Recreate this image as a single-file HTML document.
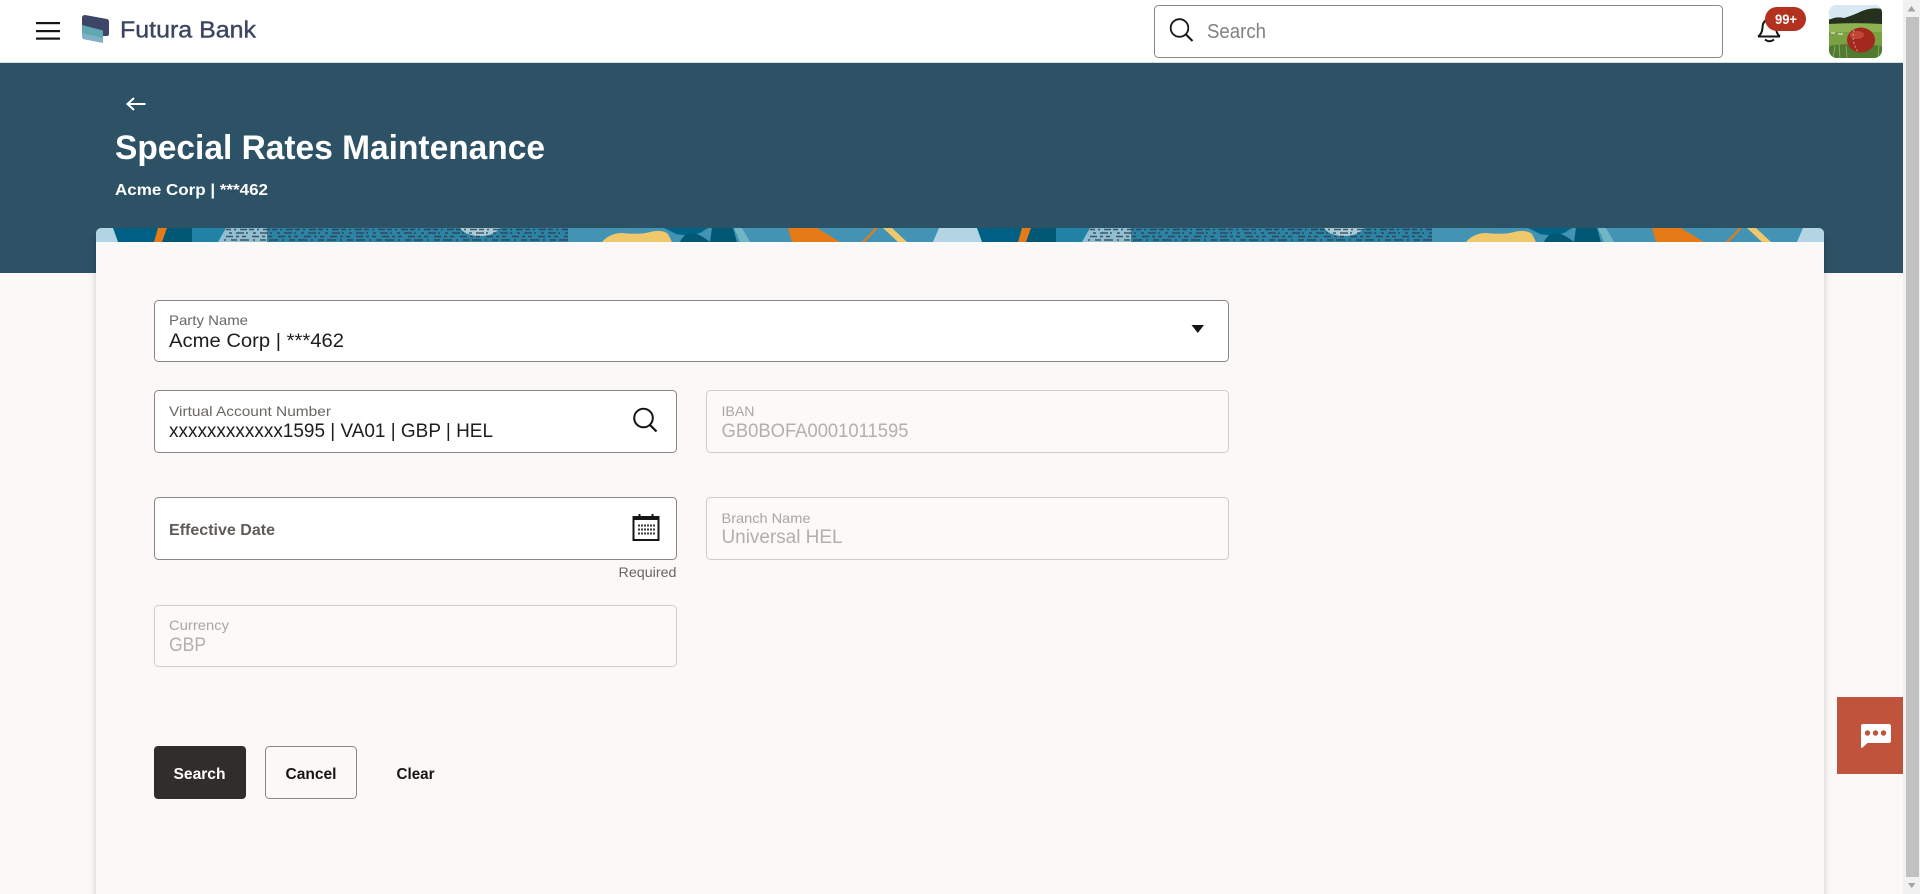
<!DOCTYPE html>
<html lang="en">
<head>
<meta charset="utf-8">
<title>Special Rates Maintenance</title>
<style>
html,body{margin:0;padding:0;width:1920px;height:894px;overflow:hidden;background:#faf9f7}
svg{display:block;position:absolute;left:0;top:0}
text{font-family:"Liberation Sans",Arial,sans-serif;white-space:pre}
.lbl{font-size:14px;fill:#6a6762}
.val{font-size:19px;fill:#1f1d1b}
.dl{font-size:14px;fill:#a8a6a2}
.dv{font-size:19px;fill:#b2b0ac}
</style>
</head>
<body>
<svg width="1920" height="894" viewBox="0 0 1920 894" xmlns="http://www.w3.org/2000/svg">
<defs>
<clipPath id="strip"><path d="M96 242V233a5 5 0 0 1 5-5H1819a5 5 0 0 1 5 5V242Z"/></clipPath>
<clipPath id="av"><rect x="1829" y="5" width="53" height="53" rx="8"/></clipPath>
<filter id="sh" x="-5%" y="-5%" width="110%" height="110%"><feGaussianBlur stdDeviation="4"/></filter>
<g id="tile">
  <rect x="96" y="228" width="864" height="14" fill="#4393b4"/>
  <rect x="96" y="228" width="22" height="14" fill="#b3d4e2"/>
  <path d="M113 228H192V242H118Z" fill="#005f85"/>
  <path d="M167 228H192V242H162Z" fill="#005874"/>
  <path d="M158 228H167L162 242H154Z" fill="#e67a17"/>
  <path d="M192 228H226L218 242H192Z" fill="#2181a6"/>
  <path d="M226 228H267L270 242H218Z" fill="#8fbfd2"/>
  <rect x="267" y="228" width="301" height="14" fill="#2b83a6"/>
  <path d="M460 228H500Q494 236 480 236Q466 236 460 228Z" fill="#a9cbd9"/>
  <g stroke="#2f3a44" stroke-width="1.600" opacity=".8" fill="none">
    <path d="M226 229.500H568" stroke-dasharray="5 3 2 4 7 2"/>
    <path d="M229 233H568" stroke-dasharray="3 4 8 2 2 5"/>
    <path d="M226 236.500H568" stroke-dasharray="7 3 3 3 4 6"/>
    <path d="M224 240H568" stroke-dasharray="2 5 6 3 9 4"/>
  </g>
  <path d="M602 242Q610 233 622 233Q640 235 650 232Q662 229 668 234L672 242Z" fill="#f0c86c"/>
  <path d="M664 228H708L700 233L690 236L676 234Z" fill="#006489"/>
  <path d="M680 242Q684 233 693 233Q700 234 710 242Z" fill="#005874"/>
  <path d="M712 228H733L737 242H710Z" fill="#005874"/>
  <path d="M734 228H742L750 242H740Z" fill="#72b5c5"/>
  <path d="M788 228H817L840 242H792Z" fill="#e67a17"/>
  <path d="M875 228H878L865 242H862Z" fill="#e67a17"/>
  <path d="M883 228H892L907 242H898Z" fill="#f0c86c"/>
  <path d="M939 228H960V242H933Z" fill="#b3d4e2"/>
</g>
</defs>

<!-- page -->
<rect width="1920" height="894" fill="#faf9f7"/>

<!-- banner -->
<rect x="0" y="63" width="1903" height="210" fill="#2d5165"/>
<g fill="none" stroke="#27495c" stroke-width="1" opacity=".18">
  <path d="M40 80Q140 70 180 150T90 230"/><path d="M70 90Q130 90 150 150T80 205"/>
  <path d="M560 70Q700 100 680 170T560 225"/><path d="M1180 80Q1300 60 1340 130T1240 225"/>
  <path d="M1210 100Q1290 90 1310 135T1250 200"/><path d="M1500 70Q1620 130 1560 190T1420 225"/>
  <path d="M1700 80Q1800 110 1780 170T1680 225"/>
</g>

<!-- header -->
<rect x="0" y="0" width="1903" height="62" fill="#fff"/>
<rect x="0" y="62" width="1903" height="1" fill="#dcdcdc"/>
<g fill="#161513">
  <rect x="36" y="22" width="24" height="2.200"/>
  <rect x="36" y="30" width="24" height="2.200"/>
  <rect x="36" y="37.500" width="24" height="2.200"/>
</g>
<!-- logo -->
<path d="M82 18Q82 15 85 15L107 19Q109 19.500 109 22V34Q109 36 107 36H103V31L82 25.500Z" fill="#3e4667"/>
<path d="M82 25L103 30.500V38.500L82 33.500Z" fill="#5fa8b0"/>
<path d="M82 33L103 38V43L85 39.500Q82 39 82 37Z" fill="#7fb0c6"/>
<text x="120" y="37.300" font-size="23" font-weight="400" fill="#3b4560" stroke="#3b4560" stroke-width=".4" textLength="136" lengthAdjust="spacingAndGlyphs">Futura Bank</text>

<!-- search -->
<rect x="1154.500" y="5.500" width="568" height="52" rx="4" fill="#fff" stroke="#8a8886"/>
<circle cx="1179.500" cy="28" r="8.800" fill="none" stroke="#161513" stroke-width="1.800"/>
<path d="M1186 34.500L1192.500 41" stroke="#161513" stroke-width="2" fill="none"/>
<text x="1207" y="38" font-size="20" fill="#82807d" textLength="59" lengthAdjust="spacingAndGlyphs">Search</text>

<!-- bell -->
<path d="M1758 36.500Q1762 34 1762.500 28Q1762.500 20 1770 19M1758 36.500H1780" fill="none" stroke="#161513" stroke-width="2"/>
<path d="M1780 36.500Q1776.500 34 1776 28" fill="none" stroke="#161513" stroke-width="2"/>
<path d="M1765 39.500Q1769.500 43 1774 39.500" fill="none" stroke="#161513" stroke-width="2"/>
<rect x="1765" y="7" width="41" height="24" rx="12" fill="#b3311f"/>
<text x="1775" y="24" font-size="14" font-weight="700" fill="#fff" textLength="22" lengthAdjust="spacingAndGlyphs">99+</text>

<!-- avatar -->
<g clip-path="url(#av)">
  <rect x="1829" y="5" width="53" height="53" fill="#7ba043"/>
  <rect x="1829" y="5" width="53" height="14" fill="#d9e9f2"/>
  <path d="M1829 20Q1836 16 1844 18Q1854 15 1862 11Q1872 7 1882 9V24Q1855 22 1829 24Z" fill="#26301f"/>
  <rect x="1829" y="24" width="53" height="8" fill="#8db252"/>
  <path d="M1829 46Q1850 42 1882 46V58H1829Z" fill="#4f7a2f"/>
  <path d="M1833 58L1835 46M1840 58L1839 44M1847 58L1846 46M1878 58L1879 46" stroke="#8fb464" stroke-width=".8" fill="none"/>
  <ellipse cx="1861" cy="40" rx="14" ry="12.500" fill="#a5281f"/>
  <ellipse cx="1857" cy="35" rx="7" ry="4" fill="#c2473a"/>
  <path d="M1854 30Q1851 41 1858 52" stroke="#c9a87a" stroke-width="1" stroke-dasharray="2 2" fill="none"/>
  <path d="M1838 34h5M1831 33h4" stroke="#e8e4d8" stroke-width="1.200"/>
</g>

<!-- card -->
<rect x="96" y="236" width="1728" height="680" fill="#000" opacity=".18" filter="url(#sh)"/>
<rect x="96" y="240" width="1728" height="654" fill="#faf9f7"/>
<g clip-path="url(#strip)">
  <use href="#tile"/>
  <use href="#tile" transform="translate(864 0)"/>
</g>

<!-- Party -->
<rect x="154.500" y="300.500" width="1074" height="61" rx="4" fill="#fff" stroke="#8a8886"/>
<text class="lbl" x="169" y="325" textLength="79" lengthAdjust="spacingAndGlyphs">Party Name</text>
<text class="val" x="169" y="347" textLength="175" lengthAdjust="spacingAndGlyphs">Acme Corp | ***462</text>
<path d="M1191.500 325H1204L1197.800 333Z" fill="#161513"/>

<!-- VA -->
<rect x="154.500" y="390.500" width="522" height="62" rx="4" fill="#fff" stroke="#8a8886"/>
<text class="lbl" x="169" y="416" textLength="162" lengthAdjust="spacingAndGlyphs">Virtual Account Number</text>
<text class="val" x="169" y="437" textLength="324" lengthAdjust="spacingAndGlyphs">xxxxxxxxxxxx1595 | VA01 | GBP | HEL</text>
<circle cx="643.500" cy="418" r="9.300" fill="none" stroke="#161513" stroke-width="2"/>
<path d="M650 425L656.500 431.500" stroke="#161513" stroke-width="2.200" fill="none"/>

<!-- IBAN -->
<rect x="706.500" y="390.500" width="522" height="62" rx="4" fill="#fbfaf8" stroke="#d0cecb"/>
<text class="dl" x="721.500" y="416" textLength="33" lengthAdjust="spacingAndGlyphs">IBAN</text>
<text class="dv" x="721.500" y="437" textLength="187" lengthAdjust="spacingAndGlyphs">GB0BOFA0001011595</text>

<!-- Effective -->
<rect x="154.500" y="497.500" width="522" height="62" rx="4" fill="#fff" stroke="#8a8886"/>
<text x="169" y="535" font-size="16" font-weight="700" fill="#5f5c57" textLength="106" lengthAdjust="spacingAndGlyphs">Effective Date</text>
<rect x="633.500" y="517" width="25" height="23" fill="none" stroke="#161513" stroke-width="2"/>
<rect x="633.500" y="517" width="25" height="3" fill="#161513"/>
<path d="M639.500 514V519M652.500 514V519" stroke="#161513" stroke-width="2"/>
<g stroke="#161513" stroke-width="2" stroke-dasharray="2 1" opacity=".85">
  <path d="M638 525.500H655M638 529.500H655M638 533.500H655"/>
</g>
<text class="lbl" x="618.500" y="577" textLength="58" lengthAdjust="spacingAndGlyphs">Required</text>

<!-- Branch -->
<rect x="706.500" y="497.500" width="522" height="62" rx="4" fill="#fbfaf8" stroke="#d0cecb"/>
<text class="dl" x="721.500" y="523" textLength="89" lengthAdjust="spacingAndGlyphs">Branch Name</text>
<text class="dv" x="721.500" y="543" textLength="121" lengthAdjust="spacingAndGlyphs">Universal HEL</text>

<!-- Currency -->
<rect x="154.500" y="605.500" width="522" height="61" rx="4" fill="#fbfaf8" stroke="#d0cecb"/>
<text class="dl" x="169" y="630" textLength="60" lengthAdjust="spacingAndGlyphs">Currency</text>
<text class="dv" x="169" y="651" textLength="37" lengthAdjust="spacingAndGlyphs">GBP</text>

<!-- Buttons -->
<rect x="154" y="746" width="92" height="53" rx="4" fill="#312d2a"/>
<text x="173.500" y="779" font-size="16" font-weight="700" fill="#fff" textLength="52" lengthAdjust="spacingAndGlyphs">Search</text>
<rect x="265.500" y="746.500" width="91" height="52" rx="4" fill="none" stroke="#8a8886"/>
<text x="285.500" y="779" font-size="16" font-weight="700" fill="#161513" textLength="51" lengthAdjust="spacingAndGlyphs">Cancel</text>
<text x="396.500" y="779" font-size="16" font-weight="700" fill="#161513" textLength="38" lengthAdjust="spacingAndGlyphs">Clear</text>

<!-- chat -->
<rect x="1837" y="697" width="66" height="77" fill="#c0533c"/>
<path d="M1863 724H1888.500Q1891 724 1891 726.500V741Q1891 743 1888.500 743H1867.500L1862 748Q1861 748 1861 747V726.500Q1861 724 1863 724Z" fill="#fff"/>
<circle cx="1867.500" cy="733" r="2.700" fill="#c0533c"/>
<circle cx="1875.500" cy="733" r="2.700" fill="#c0533c"/>
<circle cx="1883.500" cy="733" r="2.700" fill="#c0533c"/>

<!-- scrollbar -->
<rect x="1903" y="0" width="17" height="894" fill="#f1f1f1"/>
<rect x="1906" y="17" width="13" height="860" fill="#c1c1c1"/>
<path d="M1911.500 6L1915.500 11.500H1907.500Z" fill="#a3a3a3"/>
<path d="M1908 883H1915.500L1911.700 888Z" fill="#a3a3a3"/>

<!-- banner text -->
<path d="M145.500 104H128M134 98L127.500 104L134 110" fill="none" stroke="#fff" stroke-width="2"/>
<text x="115" y="159" font-size="34" font-weight="700" fill="#fff" textLength="430" lengthAdjust="spacingAndGlyphs">Special Rates Maintenance</text>
<text x="115" y="195" font-size="16" font-weight="700" fill="#fff" textLength="153" lengthAdjust="spacingAndGlyphs">Acme Corp | ***462</text>
</svg>
</body>
</html>
